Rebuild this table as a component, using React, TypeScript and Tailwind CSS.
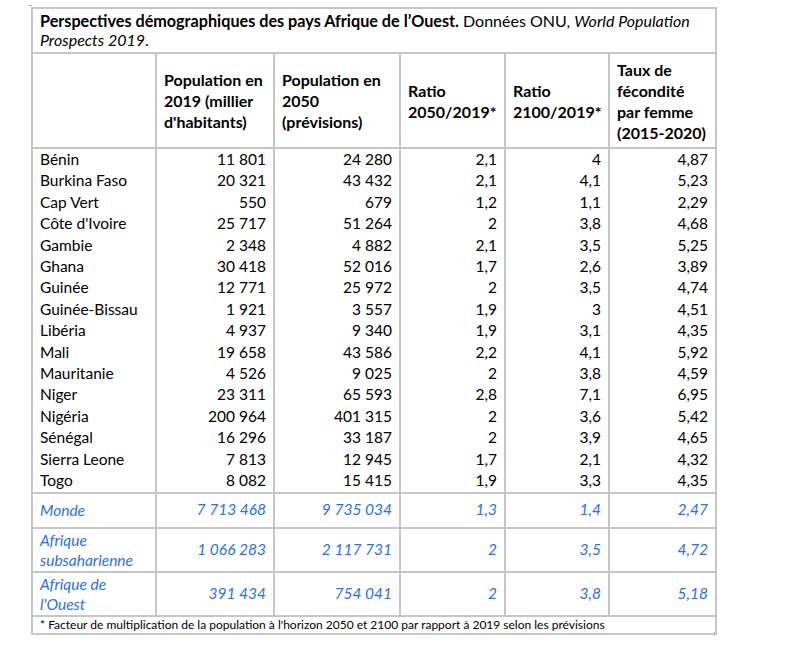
const BLUE = "text-[#2f6fe4]";

const ROWS: [string, string, string, string, string, string][] = [
  ["Bénin", "11 801", "24 280", "2,1", "4", "4,87"],
  ["Burkina Faso", "20 321", "43 432", "2,1", "4,1", "5,23"],
  ["Cap Vert", "550", "679", "1,2", "1,1", "2,29"],
  ["Côte d'Ivoire", "25 717", "51 264", "2", "3,8", "4,68"],
  ["Gambie", "2 348", "4 882", "2,1", "3,5", "5,25"],
  ["Ghana", "30 418", "52 016", "1,7", "2,6", "3,89"],
  ["Guinée", "12 771", "25 972", "2", "3,5", "4,74"],
  ["Guinée-Bissau", "1 921", "3 557", "1,9", "3", "4,51"],
  ["Libéria", "4 937", "9 340", "1,9", "3,1", "4,35"],
  ["Mali", "19 658", "43 586", "2,2", "4,1", "5,92"],
  ["Mauritanie", "4 526", "9 025", "2", "3,8", "4,59"],
  ["Niger", "23 311", "65 593", "2,8", "7,1", "6,95"],
  ["Nigéria", "200 964", "401 315", "2", "3,6", "5,42"],
  ["Sénégal", "16 296", "33 187", "2", "3,9", "4,65"],
  ["Sierra Leone", "7 813", "12 945", "1,7", "2,1", "4,32"],
  ["Togo", "8 082", "15 415", "1,9", "3,3", "4,35"],
];

const TOTALS: { name: [string, string?]; vals: string[]; h: string }[] = [
  { name: ["Monde"], vals: ["7 713 468", "9 735 034", "1,3", "1,4", "2,47"], h: "h-[35px]" },
  { name: ["Afrique", "subsaharienne"], vals: ["1 066 283", "2 117 731", "2", "3,5", "4,72"], h: "h-[44px]" },
  { name: ["Afrique de", "l'Ouest"], vals: ["391 434", "754 041", "2", "3,8", "5,18"], h: "h-[44px]" },
];

const HEAD = [
  ["Population en", "2019 (millier", "d'habitants)"],
  ["Population en", "2050", "(prévisions)"],
  ["Ratio", "2050/2019*"],
  ["Ratio", "2100/2019*"],
  ["Taux de", "fécondité", "par femme", "(2015-2020)"],
];

const cell = "border-2 border-[#c6c6c6] px-[7px]";

export default function App() {
  return (
    <div
      className="relative h-[672px] w-[800px] bg-white text-[15.5px] text-black"
      style={{ fontFamily: "Lato, 'Open Sans', sans-serif" }}
    >
      {/* crop marks */}
      <div className="absolute left-[28px] top-[5px] h-px w-[4px] bg-[#b5b5b5]" />
      <div className="absolute left-[714px] top-[632px] h-[4px] w-px bg-[#b5b5b5]" />

      <div className="pl-[31px] pt-[7px]">
        <table className="w-[684px] table-fixed border-collapse">
          <colgroup>
            <col className="w-[124px]" />
            <col className="w-[118px]" />
            <col className="w-[126px]" />
            <col className="w-[105px]" />
            <col className="w-[104px]" />
            <col className="w-[107px]" />
          </colgroup>
          <thead>
            <tr className="h-[45px]">
              <td colSpan={6} className={`${cell} align-top pt-[2px] text-[16px] leading-[19px] whitespace-nowrap`}>
                <b className="text-[16.2px]">Perspectives démographiques des pays Afrique de l’Ouest.</b> Données ONU,{" "}
                <i>World Population</i>
                <br />
                <i>Prospects 2019</i>.
              </td>
            </tr>
            <tr className="h-[95px]">
              <td className={cell} />
              {HEAD.map((lines, i) => (
                <td key={i} className={`${cell} text-[16px] font-bold leading-[21px] align-middle`}>
                  {lines.map((l) => (
                    <div key={l} className="whitespace-nowrap">
                      {l}
                    </div>
                  ))}
                </td>
              ))}
            </tr>
          </thead>
          <tbody>
            {ROWS.map((r, ri) => (
              <tr key={r[0]} className="h-[21.4px] leading-[21.4px]">
                {r.map((v, i) => (
                  <td
                    key={i}
                    className={`border-x-2 border-[#c6c6c6] px-[7px] whitespace-nowrap ${
                      i === 0 ? "text-left" : "text-right"
                    } ${ri === 0 ? "border-t-2" : ""} ${ri === ROWS.length - 1 ? "border-b-2" : ""}`}
                  >
                    {v}
                  </td>
                ))}
              </tr>
            ))}
            {TOTALS.map((t) => (
              <tr key={t.name[0]} className={`${t.h} italic ${BLUE}`}>
                <td className={`${cell} leading-[20px]`}>
                  <div>{t.name[0]}</div>
                  {t.name[1] && <div>{t.name[1]}</div>}
                </td>
                {t.vals.map((v, i) => (
                  <td key={i} className={`${cell} text-right whitespace-nowrap`}>
                    {v}
                  </td>
                ))}
              </tr>
            ))}
            <tr className="h-[18px]">
              <td colSpan={6} className={`${cell} text-[12px] leading-[15px] whitespace-nowrap`}>
                * Facteur de multiplication de la population à l'horizon 2050 et 2100 par rapport à 2019 selon les prévisions
              </td>
            </tr>
          </tbody>
        </table>
      </div>
    </div>
  );
}
